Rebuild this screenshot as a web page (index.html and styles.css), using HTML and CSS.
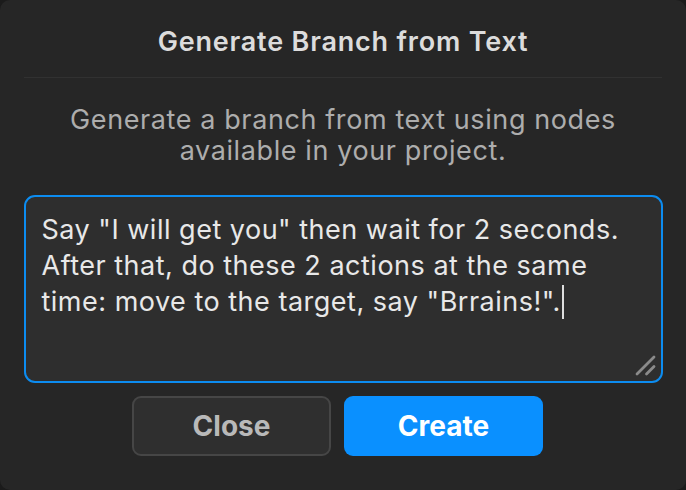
FILE: index.html
```html
<!DOCTYPE html>
<html lang="en">
<head>
<meta charset="utf-8">
<title>Generate Branch from Text</title>
<link rel="stylesheet" href="styles.css">
</head>
<body>
<div class="dialog">
  <header class="header">
    <h1 class="title">Generate Branch from Text</h1>
  </header>
  <p class="desc">Generate a branch from text using nodes available in your project.</p>
  <div class="input">
    <div class="input-text">Say "I will get you" then wait for 2 seconds. After that, do these 2 actions at the same time: move to the target, say "Brrains!".<span class="caret"></span></div>
    <svg class="grip" width="22" height="22" viewBox="0 0 22 22" aria-hidden="true">
      <line x1="3" y1="20" x2="20" y2="3" stroke="#8a8a8a" stroke-width="2.8" stroke-linecap="round"/>
      <line x1="12.5" y1="20" x2="20" y2="12.5" stroke="#8a8a8a" stroke-width="2.8" stroke-linecap="round"/>
    </svg>
  </div>
  <div class="actions">
    <button class="btn btn-close">Close</button>
    <button class="btn btn-create">Create</button>
  </div>
</div>
</body>
</html>
```
FILE: styles.css
```css
* { box-sizing: border-box; }
html, body { margin: 0; padding: 0; }
body {
  background: #1b1b1b;
  width: 686px;
  height: 490px;
  overflow: hidden;
}
.dialog {
  width: 686px;
  height: 490px;
  background: #262626;
  border-radius: 10px;
  display: flex;
  flex-direction: column;
  align-items: center;
  font-family: Inter, "Noto Sans", sans-serif;
}
.header {
  width: 638px;
  height: 78px;
  flex: none;
  border-bottom: 1px solid #313131;
  display: flex;
  align-items: center;
  justify-content: center;
}
.title {
  margin: 0;
  font-size: 27px;
  font-weight: 600;
  letter-spacing: 0.8px;
  color: #dcdcdc;
  padding-top: 5px;
}
.desc {
  margin: 26px 0 0;
  width: 600px;
  text-align: center;
  font-size: 27px;
  line-height: 31px;
  letter-spacing: 0.6px;
  color: #adadad;
}
.input {
  position: relative;
  margin-top: 29px;
  flex: none;
  width: 639px;
  height: 188px;
  border: 2px solid #0c8cf0;
  border-radius: 11px;
  background: #2e2e2e;
  padding: 15px 16px;
}
.input-text {
  font-size: 27px;
  line-height: 36px;
  letter-spacing: 0.5px;
  color: #e8e8e8;
}
.caret {
  display: inline-block;
  width: 2px;
  height: 34px;
  background: #dedede;
  vertical-align: -8px;
  margin-left: 1px;
}
.grip {
  position: absolute;
  right: 5px;
  bottom: 5px;
}
.actions {
  margin-top: 13px;
  margin-right: 11px;
  display: flex;
  gap: 13px;
}
.btn {
  width: 199px;
  height: 60px;
  border-radius: 9px;
  font-family: Inter, "Liberation Sans", sans-serif;
  font-weight: 700;
  font-size: 28px;
  padding: 0;
}
.btn-close {
  background: #2f2f2f;
  border: 2px solid #464646;
  color: #b9b9b9;
}
.btn-create {
  background: #0a90ff;
  border: none;
  color: #ffffff;
}
```
